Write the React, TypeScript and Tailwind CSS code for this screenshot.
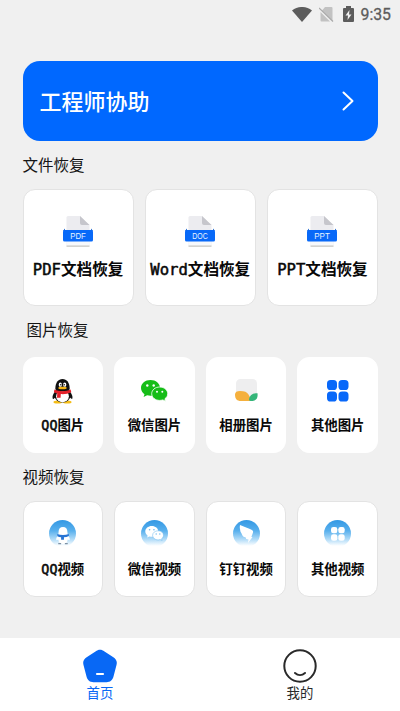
import type { ReactNode } from 'react';

interface CardItem {
  prefix?: string;
  title: string;
  icon: ReactNode;
}

function CardLabel({ prefix, title }: { prefix?: string; title: string }) {
  return (
    <span className="flex items-baseline whitespace-nowrap font-semibold text-[#080808]">
      {prefix && (
        <span className="font-normal [-webkit-text-stroke:0.5px_#080808] font-[DejaVu_Sans_Mono,monospace]">{prefix}</span>
      )}
      <span>{title}</span>
    </span>
  );
}

function FileIcon({ label }: { label: string }) {
  return (
    <svg className="h-8 w-[30px]" viewBox="0 0 30 32" aria-hidden="true">
      <path d="M3.500 1.500A1.500 1.500 0 0 1 5 0h12l9.500 9v21h-23z" fill="#ececf0" />
      <path d="M17 0l9.500 9H19a2 2 0 0 1-2-2z" fill="#c6c6cc" />
      <path d="M0 15l2-2.500V15h26v-2.500L30 15z" fill="#0757c9" />
      <path d="M3.500 25h23v4h-23z" fill="#f7f9fc" />
      <path d="M3.500 29.500h23V31h-23z" fill="#d3d3cf" />
      <rect y="14" width="30" height="11.500" rx="1.500" fill="#0869f8" />
      <text
        x="15"
        y="22.900"
        textAnchor="middle"
        textLength="15.500"
        lengthAdjust="spacingAndGlyphs"
        fill="#e8f5ff"
        fontFamily="Liberation Sans, sans-serif"
        fontSize="8.500"
      >
        {label}
      </text>
    </svg>
  );
}

function PenguinIcon() {
  return (
    <svg className="h-[25px] w-[21px]" viewBox="0 0 22 26" aria-hidden="true">
      <path d="M3.500 13C1 15.500 0 18.500.8 20.500c.7.800 2-.5 2.800-1.500h15c.8 1 2 2.200 2.700 1.500.7-2-.4-5-2.800-7.500z" fill="#111" />
      <ellipse cx="6" cy="24" rx="4.500" ry="1.700" fill="#f5bd17" />
      <ellipse cx="16" cy="24" rx="4.500" ry="1.700" fill="#f5bd17" />
      <ellipse cx="11" cy="16.500" rx="8.600" ry="8" fill="#111" />
      <ellipse cx="11" cy="18" rx="6.700" ry="6.200" fill="#fff" />
      <path d="M3.500 10C3.500 3.800 6.500 0 11 0s7.500 3.800 7.500 10l-1 3h-13z" fill="#111" />
      <ellipse cx="8.700" cy="5.800" rx="1.700" ry="2.300" fill="#fff" />
      <ellipse cx="13.300" cy="5.800" rx="1.700" ry="2.300" fill="#fff" />
      <circle cx="9.200" cy="6" r=".8" fill="#111" />
      <circle cx="12.800" cy="6" r=".8" fill="#111" />
      <ellipse cx="11" cy="9.300" rx="4.500" ry="1.400" fill="#f5b516" />
      <path d="M2.500 11c5 2.300 12 2.300 17 0l.7 2.800c-3.500 1.600-7 2.200-11 1.900l-.2 3.800H5.200l.3-4.500-3.500-1.200z" fill="#e5202a" />
    </svg>
  );
}

interface WechatProps {
  className: string;
  fill: string;
  eyes: string;
}

function WechatIcon({ className, fill, eyes }: WechatProps) {
  return (
    <svg className={className} viewBox="0 0 27 22" aria-hidden="true">
      <path d="M9.500 0C4.200 0 0 3.500 0 8c0 2.500 1.400 4.700 3.500 6.200L2.600 17l3.500-1.700c1.100.3 2.200.5 3.400.5 5.300 0 9.500-3.500 9.500-7.900S14.800 0 9.500 0z" fill={fill} />
      <circle cx="6.300" cy="5.500" r="1.200" fill={eyes} />
      <circle cx="12.700" cy="5.500" r="1.200" fill={eyes} />
      <path
        d="M18.700 7c4.500 0 8 2.900 8 6.700 0 2.100-1.100 3.900-2.800 5.100l.7 2.400-2.800-1.300c-1 .3-2 .5-3.100.5-4.500 0-8-3-8-6.700S14.200 7 18.700 7z"
        fill={fill}
        stroke={eyes}
        strokeWidth=".8"
      />
      <circle cx="16" cy="11.800" r="1" fill={eyes} />
      <circle cx="21.300" cy="11.800" r="1" fill={eyes} />
    </svg>
  );
}

function AlbumIcon() {
  return (
    <svg className="mb-px h-[23px] w-[23px]" viewBox="0 0 23 23" aria-hidden="true">
      <rect x="1" width="21" height="22" rx="4.500" fill="#eeeeef" />
      <path d="M0 15.500C0 13 2 12 5 12c4.500 0 7 1 8.500 3.500 1 1.800 1.500 3 2.500 4.500l-1 2H6c-4 0-6-2-6-6.500z" fill="#f5b03d" />
      <path d="M14 20.500c.8-4 3-6.200 8.500-6.200.7 5-1.500 7.700-6 7.700-1.500 0-2.300-.5-2.500-1.500z" fill="#34b579" />
    </svg>
  );
}

function GridIcon({ className }: { className: string }) {
  return (
    <svg className={className} viewBox="0 0 22 22" fill="currentColor" aria-hidden="true">
      <rect width="10" height="10" rx="3.600" />
      <rect x="11.500" width="10" height="10" rx="3.600" />
      <rect y="11.500" width="10" height="10" rx="3.600" />
      <rect x="11.500" y="11.500" width="10" height="10" rx="3.600" />
    </svg>
  );
}

function VideoBadge({ children }: { children: ReactNode }) {
  return (
    <span className="mb-[3px] flex h-[27px] w-[27px] items-center justify-center rounded-full bg-[linear-gradient(to_bottom,#3398e4_0%,#59b0ed_40%,#b2dcf8_72%,#ffffff_96%)]">
      {children}
    </span>
  );
}

function SmallPenguin() {
  return (
    <svg className="mt-1 h-[18px] w-4" viewBox="0 0 16 19" aria-hidden="true">
      <path d="M8 0c3 0 4.700 2 4.700 5.500 0 2 .5 3 1.600 4.700 1 1.500 1 3 .5 3.800l-1.800-.8c-.4 3.200-2.300 4.800-5 4.800s-4.600-1.600-5-4.800L1.200 14c-.5-.8-.5-2.300.5-3.800C2.800 8.500 3.300 7.500 3.300 5.500 3.300 2 5 0 8 0z" fill="#fff" />
      <path d="M2 7.500c3.500 1.200 8.500 1.200 12 0l.3 2c-1.800.9-3.500 1.300-5.300 1.400v2.500H6v-2.700c-1.300-.1-2.800-.4-4-1z" fill="#2674d4" />
      <path d="M3 17.500h3M10 17.500h3" stroke="#7d91a5" strokeWidth="1.300" />
    </svg>
  );
}

function DingIcon() {
  return (
    <svg className="h-[18px] w-[15px]" viewBox="0 0 15 18" fill="#fff" aria-hidden="true">
      <path d="M1 0l10.500 4.300c2.300 1 3 1.800 2.500 3.300-.5 1.600-1 3-1.700 4.400h1.200L9 18l.5-3.500L7.200 14l-.4-1.500C4.500 12 3.500 11 3 9.500L2.300 8C1.500 6.800 1.200 6 1.200 5 .8 3.500.6 2 1 0z" />
    </svg>
  );
}

const FILES: CardItem[] = [
  { prefix: 'PDF', title: '文档恢复', icon: <FileIcon label="PDF" /> },
  { prefix: 'Word', title: '文档恢复', icon: <FileIcon label="DOC" /> },
  { prefix: 'PPT', title: '文档恢复', icon: <FileIcon label="PPT" /> },
];

const IMAGES: CardItem[] = [
  { prefix: 'QQ', title: '图片', icon: <PenguinIcon /> },
  { title: '微信图片', icon: <WechatIcon className="mb-px h-[22px] w-[27px]" fill="#16bd18" eyes="#fff" /> },
  { title: '相册图片', icon: <AlbumIcon /> },
  { title: '其他图片', icon: <GridIcon className="h-[22px] w-[22px] text-[#0868f9]" /> },
];

const VIDEOS: CardItem[] = [
  { prefix: 'QQ', title: '视频', icon: <VideoBadge><SmallPenguin /></VideoBadge> },
  { title: '微信视频', icon: <VideoBadge><WechatIcon className="h-[15px] w-[19px]" fill="#fff" eyes="#6cb9ee" /></VideoBadge> },
  { title: '钉钉视频', icon: <VideoBadge><DingIcon /></VideoBadge> },
  { title: '其他视频', icon: <VideoBadge><GridIcon className="mt-px h-[14px] w-[14px] text-white" /></VideoBadge> },
];

function SmallCards({ items, bordered }: { items: CardItem[]; bordered?: boolean }) {
  return (
    <div className="grid grid-cols-4 gap-[11px]">
      {items.map((item) => (
        <div
          key={item.title}
          className={`flex h-24 flex-col items-center rounded-xl border bg-white pt-[18px] ${bordered ? 'border-[#e3e3e3]' : 'border-white'}`}
        >
          <div className="flex h-[30px] items-center">{item.icon}</div>
          <div className="mt-2 h-5 text-[13.4px] leading-5">
            <CardLabel prefix={item.prefix} title={item.title} />
          </div>
        </div>
      ))}
    </div>
  );
}

function StatusBar() {
  return (
    <div className="flex h-7 items-center justify-end pr-[9px] text-[#5c5c5c]">
      <svg className="h-[15px] w-5" viewBox="0 0 20 15" fill="currentColor" aria-hidden="true">
        <path d="M0 3.500C6-1.200 14-1.200 20 3.500L10 15z" />
      </svg>
      <svg className="ml-[7px] h-[15px] w-[15px]" viewBox="0 0 15 15" aria-hidden="true">
        <path d="M6 0h6.500a1 1 0 0 1 1 1v13L3 3.500zM1.500 5L11 14.500H2.500a1 1 0 0 1-1-1z" fill="#c2c2c2" />
        <path d="M0 1l14 13.500" stroke="#aaa" strokeWidth="1.200" />
      </svg>
      <svg className="ml-[9px] h-4 w-[11px]" viewBox="0 0 11 16" aria-hidden="true">
        <path d="M3 0h5v2h2a1 1 0 0 1 1 1v12a1 1 0 0 1-1 1H1a1 1 0 0 1-1-1V3a1 1 0 0 1 1-1h2z" fill="currentColor" />
        <path d="M6.500 4L2.500 9.500H5L4.500 14l4-5.500H6z" fill="#f0f0f0" />
      </svg>
      <span className="mt-px ml-[7px] text-[15.8px] leading-5 font-[Roboto,sans-serif] [-webkit-text-stroke:0.3px_#5c5c5c]">9:35</span>
    </div>
  );
}

export default function App() {
  return (
    <div className="flex h-[711px] w-[400px] flex-col overflow-hidden bg-[#f0f0f0] text-[#151515] font-[Noto_Sans_CJK_SC,sans-serif]">
      <StatusBar />
      <main className="flex-1 pt-[33px] pr-[22px] pl-[22.5px]">
        <button className="flex h-20 w-full items-center justify-between rounded-[17px] bg-[#0068ff] pr-[24px] pl-[17px] text-white">
          <span className="pb-[2px] text-[22px] leading-8 font-medium">工程师协助</span>
          <svg className="h-5 w-3" viewBox="0 0 12 20" fill="none" aria-hidden="true">
            <path d="M1.500 1.500L10.500 10l-9 8.500" stroke="currentColor" strokeWidth="2" strokeLinecap="round" strokeLinejoin="round" />
          </svg>
        </button>

        <h2 className="mt-[11px] h-[25px] text-[15.500px] leading-6">文件恢复</h2>
        <div className="mt-3 grid grid-cols-3 gap-[11px]">
          {FILES.map((item) => (
            <div key={item.prefix} className="flex h-[117px] flex-col items-center rounded-xl border border-[#e3e3e3] bg-white pt-[26px]">
              {item.icon}
              <div className="mt-2 text-[15.600px] leading-6">
                <CardLabel prefix={item.prefix} title={item.title} />
              </div>
            </div>
          ))}
        </div>

        <h2 className="mt-[11px] h-[25px] pl-1 text-[15.500px] leading-6">图片恢复</h2>
        <div className="mt-[15px]">
          <SmallCards items={IMAGES} />
        </div>

        <h2 className="mt-[11px] h-[25px] text-[15.500px] leading-6">视频恢复</h2>
        <div className="mt-3">
          <SmallCards items={VIDEOS} bordered />
        </div>
      </main>

      <nav className="grid h-[73px] grid-cols-2 bg-white">
        <a className="flex flex-col items-center pt-[11px] text-[#0868f5]">
          <svg className="h-[34px] w-[34px]" viewBox="0 0 34 34" aria-hidden="true">
            <path d="M12.500 2.500c3-2.300 6-2.300 9 0l8.500 5.500c3.400 2.300 4.400 4.700 3.500 8l-3 11.500c-1.200 4-3.300 5.700-7 5.700h-13c-3.700 0-5.800-1.700-7-5.700L.5 16C-.4 12.700.6 10.300 4 8z" fill="currentColor" />
            <path d="M14 25h6" stroke="#fff" strokeWidth="2.200" strokeLinecap="round" />
          </svg>
          <span className="-mt-px text-[13.400px] leading-5">首页</span>
        </a>
        <a className="flex flex-col items-center pt-[11px] text-[#292929]">
          <svg className="h-[34px] w-[34px]" viewBox="0 0 34 34" fill="none" stroke="currentColor" strokeWidth="2" aria-hidden="true">
            <circle cx="17" cy="17" r="15.700" />
            <path d="M12 24c3 2.600 7 2.600 10 0" strokeLinecap="round" />
          </svg>
          <span className="-mt-px text-[13.400px] leading-5">我的</span>
        </a>
      </nav>
    </div>
  );
}
